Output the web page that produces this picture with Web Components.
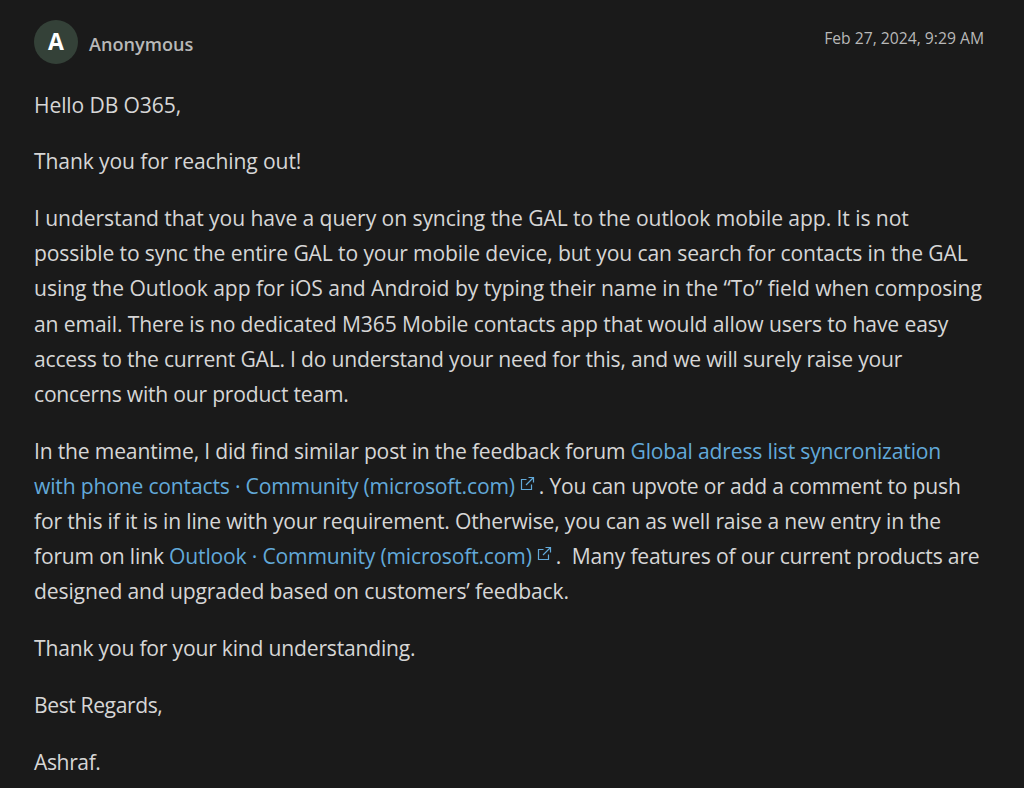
<!DOCTYPE html>
<html lang="en">
<head>
<meta charset="UTF-8">
<title>Reply</title>
<style>
html, body { margin: 0; background: #1a1a1a; }
</style>
</head>
<body>
<reply-card>
    <reply-header slot="header" name="Anonymous" initial="A" date="Feb 27, 2024, 9:29 AM"></reply-header>
    <reply-para>Hello DB O365,</reply-para>
    <reply-para>Thank you for reaching out!</reply-para>
    <reply-para><span style="letter-spacing:-.075px">I understand that you have a query on syncing the GAL to the outlook mobile app. It is not</span><br>possible to sync the entire GAL to your mobile device, but you can search for contacts in the GAL<br><span style="letter-spacing:-.05px">using the Outlook app for iOS and Android by typing their name in the “To” field when composing</span><br>an email. There is no dedicated M365 Mobile contacts app that would allow users to have easy<br><span style="letter-spacing:-.205px">access to the current GAL. I do understand your need for this, and we will surely raise your</span><br><span style="letter-spacing:-.22px">concerns with our product team.</span></reply-para>
    <reply-para style="letter-spacing:-.18px">In the meantime, I did find similar post in the feedback forum <ext-link>Global adress list syncronization<br>with phone contacts · Community (microsoft.com)</ext-link>. You can upvote or add a comment to push<br>for this if it is in line with your requirement. Otherwise, you can as well raise a new entry in the<br>forum on link <ext-link>Outlook · Community (microsoft.com)</ext-link>.&nbsp; Many features of our current products are<br><span style="letter-spacing:-.14px">designed and upgraded based on customers’ feedback.</span></reply-para>
    <reply-para style="letter-spacing:-.2px">Thank you for your kind understanding.</reply-para>
    <reply-para style="letter-spacing:-.4px">Best Regards,</reply-para>
    <reply-para style="letter-spacing:-.4px">Ashraf.</reply-para>
</reply-card>
<script>
    class ReplyCard extends HTMLElement {
        constructor() {
            super();
            this.attachShadow({ mode: 'open' });
            this.shadowRoot.innerHTML = `
            <style>
                :host { display: block; height: 788px; overflow: hidden; box-sizing: border-box; padding: 20px 40px 0 34px;
                    background: #1a1a1a; color: #d6d6d6; font-family: "Open Sans", sans-serif; font-size: 21.1px; line-height: 35.1px; letter-spacing: -0.12px; }
                .body { display: flex; flex-direction: column; gap: 21.8px; margin-top: 23.5px; }
            </style>
            <slot name="header"></slot>
            <div class="body"><slot></slot></div>`;
        }
    }
    class ReplyHeader extends HTMLElement {
        constructor() {
            super();
            this.attachShadow({ mode: 'open' });
            this.shadowRoot.innerHTML = `
            <style>
                :host { display: flex; align-items: flex-start; justify-content: space-between; height: 43px; letter-spacing: 0; }
                .who { display: flex; align-items: center; gap: 11px; }
                .avatar { width: 44px; height: 44px; border-radius: 50%; background: #344138; color: #fff;
                    display: flex; align-items: center; justify-content: center; font-size: 23px; font-weight: 700; line-height: 1; padding-bottom: 1px; box-sizing: border-box; }
                .name { font-size: 18.1px; font-weight: 600; color: #b8b8b8; line-height: 1; margin-top: 5px; }
                .date { font-size: 15.7px; color: #b8b8b8; line-height: 1; margin-top: 11px; }
            </style>
            <div class="who">
                <div class="avatar">${this.getAttribute('initial')}</div>
                <div class="name">${this.getAttribute('name')}</div>
            </div>
            <div class="date">${this.getAttribute('date')}</div>`;
        }
    }
    class ReplyPara extends HTMLElement {
        constructor() {
            super();
            this.attachShadow({ mode: 'open' });
            this.shadowRoot.innerHTML = `
            <style>:host { display: block; white-space: nowrap; }</style><slot></slot>`;
        }
    }
    class ExtLink extends HTMLElement {
        constructor() {
            super();
            this.attachShadow({ mode: 'open' });
            this.shadowRoot.innerHTML = `
            <style>
                :host { display: inline; color: #62a9d9; }
                svg { width: 15px; height: 15px; margin: 0 4px 0 5px; vertical-align: 3px; }
            </style>
            <slot></slot><svg viewBox="0 0 15 15" fill="none" stroke="currentColor" stroke-width="1.2">
                <path d="M6.5 3.5H1.5V13.5H11.5V8.5"/>
                <path d="M6 9L13.5 1.5M8.5 1.5H13.5V6.5"/>
            </svg>`;
        }
    }
    customElements.define('reply-card', ReplyCard);
    customElements.define('reply-header', ReplyHeader);
    customElements.define('reply-para', ReplyPara);
    customElements.define('ext-link', ExtLink);
</script>
</body>
</html>
